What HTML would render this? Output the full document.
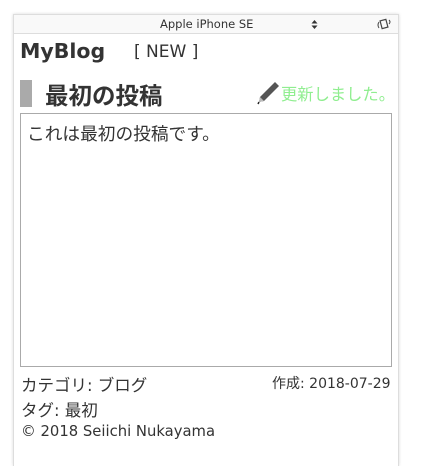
<!DOCTYPE html>
<html style="overflow:hidden;height:466px"><head><meta charset="utf-8"><style>
*{margin:0;padding:0;box-sizing:border-box}
body{width:426px;height:466px;background:#fff;position:relative;overflow:hidden;font-family:"DejaVu Sans","Noto Sans CJK JP",sans-serif;color:#333}
.frame{position:absolute;left:13px;top:14px;width:386px;height:452px;border:1px solid #ddd;border-bottom:none;box-shadow:0 0 3px rgba(0,0,0,.15);background:#fff}
.bar{position:absolute;left:0;top:0;width:384px;height:19px;background:#f9f9f9;border-bottom:1px solid #ddd;font-size:11.5px;color:#333}
.a{position:absolute;white-space:nowrap}
</style></head><body>
<div class="frame">
 <div class="bar">
  <span class="a" style="left:146px;top:2px">Apple iPhone SE</span>
  <svg class="a" style="left:297px;top:5px" width="7" height="9" viewBox="0 0 7 9"><path d="M3.5 0 L6.5 3.5 H0.5 Z M3.5 9 L6.5 5.5 H0.5 Z" fill="#333"/></svg>
  <svg class="a" style="left:362px;top:3px" width="16" height="12" viewBox="0 0 16 12"><rect x="5" y="2" width="6" height="8" fill="none" stroke="#444" stroke-width="1.2" transform="rotate(-15 8 6)"/><path d="M3 4 Q1 7 3 10 M13 2 Q15 4 13 6" fill="none" stroke="#444" stroke-width="1"/></svg>
 </div>
</div>
<div class="a" style="left:20px;top:39px;font-size:20.5px;font-weight:bold;color:#333">MyBlog</div>
<div class="a" style="left:134px;top:42px;font-size:17px;color:#333">[ NEW ]</div>
<div class="a" style="left:20px;top:80px;width:12px;height:27px;background:#aaa"></div>
<div class="a" style="left:45px;top:77px;font-size:23.5px;font-weight:bold;color:#333">最初の投稿</div>
<svg class="a" style="left:255px;top:80px" width="26" height="26" viewBox="0 0 26 26"><path d="M20 2 L24 6 L9 21 L4 22 L5 17 Z" fill="#555"/><path d="M5 17 L9 21 L4 22 Z" fill="#bbb"/><path d="M4 22 L3 24" stroke="#222" stroke-width="1.5"/></svg>
<div class="a" style="left:281px;top:81px;font-size:16.3px;color:#90ee90">更新しました。</div>
<div class="a" style="left:20px;top:113px;width:372px;height:254px;border:1px solid #aaa"></div>
<div class="a" style="left:27px;top:120px;font-size:17.7px;color:#333">これは最初の投稿です。</div>
<div class="a" style="left:21px;top:372px;font-size:16.5px">カテゴリ: ブログ</div>
<div class="a" style="left:272px;top:373px;font-size:14px">作成: 2018-07-29</div>
<div class="a" style="left:21px;top:397px;font-size:16.5px">タグ: 最初</div>
<div class="a" style="left:21px;top:423px;font-size:14.8px">© 2018 Seiichi Nukayama</div>
</body></html>
